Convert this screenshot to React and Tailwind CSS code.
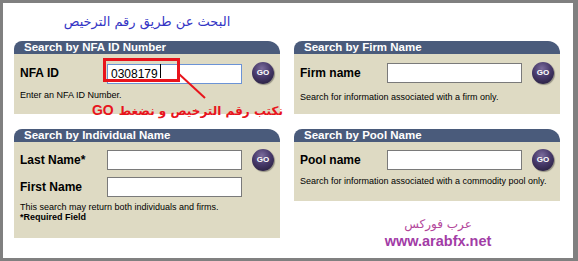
import React from 'react'

const GoButton = () => (
  <button className="w-[22px] h-[22px] shrink-0 rounded-full bg-[radial-gradient(circle_at_45%_30%,#7b6c9c_0%,#47396a_45%,#1d1730_100%)] shadow-[1px_1px_1px_rgba(0,0,0,0.35)] text-white text-[8px] font-bold leading-none flex items-center justify-center">
    GO
  </button>
)

const Panel = ({ title, children }) => (
  <div>
    <div className="h-[13px] bg-[#4a5b7b] rounded-tl-[8px] rounded-tr-[12px] pl-[10px] text-white font-bold text-[11.5px] leading-[13px]">
      {title}
    </div>
    <div className="bg-[#dedac3] px-[6px]">{children}</div>
  </div>
)

const Field = ({ label, children }) => (
  <div className="flex items-center h-[22px]">
    <span className="w-[87px] text-[12px] font-bold text-black">{label}</span>
    {children}
  </div>
)

const TextBox = ({ value = '', focused = false }) => (
  <input
    readOnly
    value={value}
    className={`w-[135px] h-[20px] px-[3px] text-[12px] text-black bg-white outline-none border ${
      focused ? 'border-[#6b93d6]' : 'border-[#7a7a7a]'
    }`}
  />
)

export default function App() {
  return (
    <div
      className="w-[578px] h-[261px] bg-white border-[#808080] border-t-[3px] border-l-[3px] border-r-[5px] border-b-[3px] pl-[11px] pr-[13px]"
      style={{ fontFamily: '"Liberation Sans", Arial, sans-serif' }}
    >
      <div className="grid grid-cols-2 gap-x-[14px]">
        {/* left column */}
        <div className="flex flex-col min-w-0">
          <div
            dir="rtl"
            className="h-[38px] pt-[9px] text-center text-[13px] leading-[20px] text-[#3434c4] font-['DejaVu_Sans',sans-serif]"
          >
            البحث عن طريق رقم الترخيص
          </div>

          <div className="relative">
            <Panel title="Search by NFA ID Number">
              <div className="pt-[8px] h-[60px]">
                <Field label="NFA ID">
                  <div className="relative">
                    <TextBox value="0308179" focused />
                    <span className="absolute left-[53px] top-[3px] w-px h-[14px] bg-black" />
                    <span className="absolute -left-[4px] -top-[3px] w-[77px] h-[24px] border-[3px] border-[#e8141c]" />
                  </div>
                  <span className="ml-[10px]">
                    <GoButton />
                  </span>
                </Field>
                <p className="mt-[6px] text-[9px] leading-[11px] text-black">Enter an NFA ID Number.</p>
              </div>
            </Panel>

            {/* annotation */}
            <svg className="absolute left-[164px] top-[31px]" width="30" height="28" viewBox="0 0 30 28">
              <path d="M1 2 L27 26" stroke="#e8141c" strokeWidth="2" fill="none" />
            </svg>
            <div
              dir="rtl"
              className="absolute -right-[3px] top-[59px] flex items-center gap-[5px] text-[#e8141c] font-bold whitespace-nowrap"
            >
              <span className="text-[12px] font-['DejaVu_Sans',sans-serif]">نكتب رقم الترخيص و نضغط</span>
              <span className="text-[14px]">GO</span>
            </div>
          </div>

          <div className="mt-[15px]">
            <Panel title="Search by Individual Name">
              <div className="pt-[7px] h-[96px]">
                <Field label="Last Name*">
                  <TextBox />
                  <span className="ml-[10px]">
                    <GoButton />
                  </span>
                </Field>
                <div className="mt-[5px]">
                  <Field label="First Name">
                    <TextBox />
                  </Field>
                </div>
                <p className="mt-[5px] text-[9px] leading-[9px] text-black">
                  This search may return both individuals and firms.
                </p>
                <p className="text-[9px] leading-[11px] font-bold text-black">*Required Field</p>
              </div>
            </Panel>
          </div>
        </div>

        {/* right column */}
        <div className="flex flex-col pt-[38px] min-w-0">
          <Panel title="Search by Firm Name">
            <div className="pt-[8px] h-[60px]">
              <Field label="Firm name">
                <TextBox />
                <span className="ml-[10px]">
                  <GoButton />
                </span>
              </Field>
              <p className="mt-[8px] text-[9px] leading-[11px] text-black">
                Search for information associated with a firm only.
              </p>
            </div>
          </Panel>

          <div className="mt-[15px]">
            <Panel title="Search by Pool Name">
              <div className="pt-[7px] h-[59px]">
                <Field label="Pool name">
                  <TextBox />
                  <span className="ml-[10px]">
                    <GoButton />
                  </span>
                </Field>
                <p className="mt-[5px] text-[9px] leading-[11px] text-black">
                  Search for information associated with a commodity pool only.
                </p>
              </div>
            </Panel>
          </div>

          <div className="flex flex-col items-center pl-[22px] mt-[15px]">
            <span dir="rtl" className="text-[12px] leading-[16px] text-[#b3479b] font-['DejaVu_Sans',sans-serif]">
              عرب فوركس
            </span>
            <span className="text-[14.5px] leading-[18px] font-bold text-[#a23ca6]">www.arabfx.net</span>
          </div>
        </div>
      </div>
    </div>
  )
}
